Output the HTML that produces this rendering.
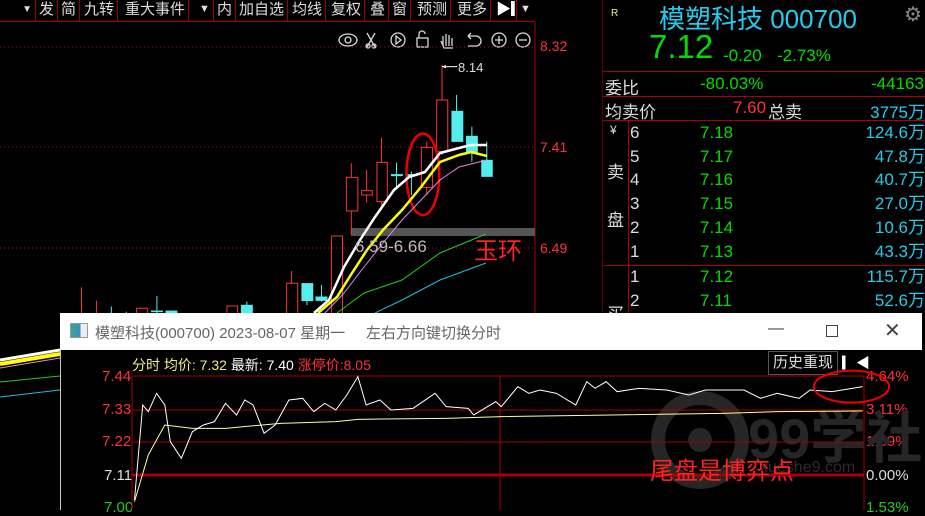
<!DOCTYPE html>
<html><head><meta charset="utf-8"><style>
*{margin:0;padding:0;box-sizing:border-box}
body{width:925px;height:510px;background:#000;overflow:hidden;position:relative;font-family:"Liberation Sans","Noto Sans CJK SC",sans-serif}
.a{position:absolute;white-space:nowrap}
.tb{position:absolute;top:0;height:21px;line-height:19px;font-size:15px;color:#ddd;border-right:1px solid #900;padding:0 3px}
.r{color:#ddd;font-size:17px}
.g{color:#00dd00}.c{color:#22ccee}
</style></head><body>
<!-- toolbar -->
<div class="a" style="left:0;top:21px;width:535px;height:1px;background:#a00"></div>
<div class="tb" style="left:0;width:36px;text-align:right;font-size:10px">▼</div>
<div class="tb" style="left:36px">发</div>
<div class="tb" style="left:58px">简</div>
<div class="tb" style="left:81px">九转</div>
<div class="tb" style="left:122px">重大事件</div>
<div class="tb" style="left:196px;font-size:11px">▼</div>
<div class="tb" style="left:214px">内</div>
<div class="tb" style="left:236px">加自选</div>
<div class="tb" style="left:289px">均线</div>
<div class="tb" style="left:328px">复权</div>
<div class="tb" style="left:367px">叠</div>
<div class="tb" style="left:389px">窗</div>
<div class="tb" style="left:414px">预测</div>
<div class="tb" style="left:454px">更多</div>
<div class="tb" style="left:493px;width:24px;color:#fff">▶▎</div>
<div class="tb" style="left:517px;font-size:11px;border:none">▼</div>
<!-- main chart svg -->
<svg class="a" style="left:0;top:0" width="603" height="320">
<g stroke="#fff" stroke-width="1.3" fill="none" opacity=".85">
<ellipse cx="348" cy="40" rx="9" ry="6"/><circle cx="348" cy="40" r="3"/>
<path d="M367 33l8 14M375 33l-8 14"/><circle cx="368" cy="46" r="2"/><circle cx="374" cy="46" r="2"/>
<circle cx="398" cy="40" r="7"/><path d="M396 36v8l5-4z"/>
<rect x="417" y="38" width="11" height="9"/><path d="M419 38v-4a3 3 0 0 1 6 0"/>
<path d="M443 46v-10M446 46v-12M449 46v-11M452 46v-8M441 41l3 7h9"/>
<path d="M468 36h8a5 5 0 0 1 0 10h-8M468 36l3-3M468 36l3 3"/>
<circle cx="499" cy="40" r="7"/><path d="M495 40h8M499 36v8"/>
<circle cx="523" cy="40" r="7"/><path d="M519 40h8"/>
</g>
<line x1="535" y1="22" x2="535" y2="320" stroke="#a00"/>
<line x1="603" y1="0" x2="603" y2="320" stroke="#a00"/>
<g stroke="#c00" stroke-dasharray="1 3"><line x1="0" y1="47" x2="535" y2="47"/><line x1="0" y1="147" x2="535" y2="147"/><line x1="0" y1="248" x2="535" y2="248"/></g>
<rect x="351" y="228" width="184" height="8" fill="#555"/>
<g transform="scale(0.3827,0.3333)">
<g fill="none" stroke="#f33" stroke-width="1" vector-effect="non-scaling-stroke">
<path d="M1155 195v105M1155 455v10" vector-effect="non-scaling-stroke"/><rect x="1141" y="300" width="29" height="155" vector-effect="non-scaling-stroke"/>
<path d="M1115 425v17M1115 562v23" vector-effect="non-scaling-stroke"/><rect x="1101" y="442" width="29" height="120" vector-effect="non-scaling-stroke"/>
<path d="M997 413v74M997 605v25" vector-effect="non-scaling-stroke"/><rect x="985" y="487" width="27" height="118" vector-effect="non-scaling-stroke"/>
<path d="M958 510v62M958 585v23" vector-effect="non-scaling-stroke"/><rect x="945" y="572" width="28" height="13" vector-effect="non-scaling-stroke"/>
<path d="M918 490v42M918 633v72" vector-effect="non-scaling-stroke"/><rect x="905" y="532" width="30" height="101" vector-effect="non-scaling-stroke"/>
<rect x="866" y="708" width="29" height="240" vector-effect="non-scaling-stroke"/>
<path d="M762 813v37" vector-effect="non-scaling-stroke"/><rect x="749" y="850" width="29" height="100" vector-effect="non-scaling-stroke"/>
<rect x="593" y="918" width="28" height="30" vector-effect="non-scaling-stroke"/><rect x="357" y="925" width="28" height="25" vector-effect="non-scaling-stroke"/>
<path d="M213 862v90M252 902v50M566 940v10" vector-effect="non-scaling-stroke"/>
</g>
<g fill="#55eeee" stroke="#55eeee" vector-effect="non-scaling-stroke">
<path d="M1193 285v50M1233 380v105M1272 425v55M1036 488v72M1075 515v70M840 855v50M802 900v15M645 905v15M410 888v60M291 920v30M330 935v15" fill="none" vector-effect="non-scaling-stroke"/>
<rect x="1180" y="333" width="30" height="92"/><rect x="1218" y="408" width="30" height="52"/><rect x="1258" y="480" width="29" height="50"/>
<rect x="1022" y="523" width="30" height="5"/><rect x="1060" y="523" width="30" height="5"/>
<rect x="825" y="890" width="30" height="12"/><rect x="788" y="850" width="30" height="53"/>
<rect x="630" y="915" width="30" height="35"/><rect x="433" y="932" width="30" height="15"/><rect x="395" y="932" width="30" height="4"/>
</g>
<path d="M1155 200h40" stroke="#fff" fill="none" vector-effect="non-scaling-stroke"/><path d="M1155 200l10-5v10z" fill="#fff"/>
<ellipse cx="1105" cy="523" rx="43" ry="122" fill="none" stroke="#e00" stroke-width="2.5" vector-effect="non-scaling-stroke"/>
</g>
<text x="458" y="72" fill="#ddd" font-size="13" font-family="Liberation Sans">8.14</text>
<polyline points="314,313 329,300 344,267 360,240 375,217 394,190 409,177 425,172 440,153 459,148 471,145 487,145" fill="none" stroke="#fff" stroke-width="2.5"/>
<polyline points="318,313 337,297 352,273 367,250 383,230 402,210 421,187 440,162 459,155 471,152 487,156" fill="none" stroke="#ffff00" stroke-width="2.5"/>
<polyline points="325,313 344,293 364,267 383,243 402,220 421,200 440,180 459,167 487,160" fill="none" stroke="#e088e0" stroke-width="1"/>
<polyline points="337,313 364,293 402,280 440,253 486,234" fill="none" stroke="#22cc22" stroke-width="1"/>
<polyline points="375,313 402,300 440,280 486,263" fill="none" stroke="#22bbdd" stroke-width="1"/>
<g stroke="#f33" fill="none"><path d="M0 350h30M8 345v10M22 345v10"/><rect x="32" y="346" width="10" height="9"/></g>
<rect x="46" y="343" width="12" height="4" fill="#55eeee"/>
</svg>
<div class="a" style="left:540px;top:38px;color:#f33;font-size:14px">8.32</div>
<div class="a" style="left:540px;top:139px;color:#f33;font-size:14px">7.41</div>
<div class="a" style="left:540px;top:240px;color:#f33;font-size:14px">6.49</div>
<div class="a" style="left:355px;top:237px;color:#bbb;font-size:17px">6.59-6.66</div>
<div class="a" style="left:474px;top:231px;color:#f22;font-size:24px">玉环</div>
<!-- right panel -->
<div class="a" style="left:611px;top:8px;color:#ee8;font-size:10px">R</div>
<div class="a c" style="left:659px;top:-1px;font-size:26px">模塑科技 000700</div>
<div class="a" style="left:904px;top:2px;color:#888;font-size:20px">⚙</div>
<div class="a g" style="left:649px;top:28px;font-size:33px">7.12</div>
<div class="a g" style="left:723px;top:46px;font-size:17px">-0.20</div>
<div class="a g" style="left:777px;top:46px;font-size:17px">-2.73%</div>
<div class="a" style="left:603px;top:71px;width:322px;height:1px;background:#a00"></div>
<div class="a" style="left:603px;top:96px;width:322px;height:1px;background:#a00"></div>
<div class="a" style="left:603px;top:120px;width:322px;height:1px;background:#a00"></div>
<div class="a" style="left:603px;top:265px;width:322px;height:1px;background:#a00"></div>
<div class="a" style="left:628px;top:120px;width:1px;height:200px;background:#a00"></div>
<div class="a r" style="left:605px;top:74px">委比</div>
<div class="a g" style="left:700px;top:74px;font-size:17px">-80.03%</div>
<div class="a g" style="left:871px;top:74px;font-size:17px">-44163</div>
<div class="a r" style="left:605px;top:98px">均卖价</div>
<div class="a" style="left:733px;top:98px;color:#f33;font-size:17px">7.60</div>
<div class="a r" style="left:768px;top:98px">总卖</div>
<div class="a c" style="left:851px;top:98px;font-size:17px;width:74px;text-align:right">3775万</div>
<div class="a r" style="left:610px;top:123px;font-size:12px">¥</div>
<div class="a r" style="left:607px;top:158px">卖</div>
<div class="a r" style="left:607px;top:206px">盘</div>
<div class="a r" style="left:607px;top:300px">买</div>
<div class="a" style="left:630px;top:121px;width:295px;font-size:17px;line-height:23.7px">
<div style="display:flex"><span class="r" style="width:70px">6</span><span class="g" style="width:95px">7.18</span><span class="c" style="flex:1;text-align:right">124.6万</span></div>
<div style="display:flex"><span class="r" style="width:70px">5</span><span class="g" style="width:95px">7.17</span><span class="c" style="flex:1;text-align:right">47.8万</span></div>
<div style="display:flex"><span class="r" style="width:70px">4</span><span class="g" style="width:95px">7.16</span><span class="c" style="flex:1;text-align:right">40.7万</span></div>
<div style="display:flex"><span class="r" style="width:70px">3</span><span class="g" style="width:95px">7.15</span><span class="c" style="flex:1;text-align:right">27.0万</span></div>
<div style="display:flex"><span class="r" style="width:70px">2</span><span class="g" style="width:95px">7.14</span><span class="c" style="flex:1;text-align:right">10.6万</span></div>
<div style="display:flex"><span class="r" style="width:70px">1</span><span class="g" style="width:95px">7.13</span><span class="c" style="flex:1;text-align:right">43.3万</span></div>
<div style="display:flex;margin-top:2px"><span class="r" style="width:70px">1</span><span class="g" style="width:95px">7.12</span><span class="c" style="flex:1;text-align:right">115.7万</span></div>
<div style="display:flex"><span class="r" style="width:70px">2</span><span class="g" style="width:95px">7.11</span><span class="c" style="flex:1;text-align:right">52.6万</span></div>
</div>
<!-- left lower lines (outside popup) -->
<svg class="a" style="left:0;top:340px" width="60" height="70">
<path d="M0 20 L60 10" stroke="#fff" stroke-width="3"/>
<path d="M0 24 L60 14" stroke="#ffff00" stroke-width="4"/>
<path d="M0 28 L60 18" stroke="#e088e0"/>
<path d="M0 42 L60 36" stroke="#22cc22"/>
<path d="M0 57 L60 50" stroke="#22bbdd"/>
</svg>
<!-- popup -->
<div class="a" style="left:60px;top:313px;width:862px;height:197px;background:#000;border-left:1px solid #ccc"></div>
<div class="a" style="left:60px;top:313px;width:862px;height:37px;background:#fff"></div>
<div class="a" style="left:70px;top:323px;width:18px;height:15px;border:1px solid #999;background:linear-gradient(90deg,#3a8 0,#48c 60%,#eee 60%)"></div>
<div class="a" style="left:95px;top:322px;font-size:15px;color:#666">模塑科技(000700) 2023-08-07 星期一&nbsp;&nbsp;&nbsp;&nbsp;&nbsp;左右方向键切换分时</div>
<div class="a" style="left:768px;top:320px;font-size:16px;color:#444">—</div>
<div class="a" style="left:826px;top:325px;width:12px;height:12px;border:1px solid #444"></div>
<div class="a" style="left:884px;top:318px;font-size:20px;color:#444">✕</div>
<div class="a" style="left:132px;top:355px;font-size:14px;color:#ee8">分时 均价: 7.32 <span style="color:#fff">最新: 7.40</span> <span style="color:#f33">涨停价:8.05</span></div>
<div class="a" style="left:768px;top:351px;width:70px;height:24px;border:1px solid #555;color:#ddd;font-size:15px;line-height:22px;text-align:center">历史重现</div>
<div class="a" style="left:842px;top:353px;font-size:14px;color:#fff">▎◀</div>
<div class="a" style="left:102px;top:368px;color:#f33;font-size:15px">7.44</div>
<div class="a" style="left:102px;top:401px;color:#f33;font-size:15px">7.33</div>
<div class="a" style="left:102px;top:433px;color:#f33;font-size:15px">7.22</div>
<div class="a" style="left:104px;top:467px;color:#ddd;font-size:15px">7.11</div>
<div class="a" style="left:104px;top:499px;color:#2c2;font-size:15px">7.00</div>
<div class="a" style="left:866px;top:368px;color:#f33;font-size:15px">4.64%</div>
<div class="a" style="left:866px;top:401px;color:#f33;font-size:15px">3.11%</div>
<div class="a" style="left:866px;top:433px;color:#f33;font-size:15px">1.59%</div>
<div class="a" style="left:866px;top:467px;color:#ddd;font-size:15px">0.00%</div>
<div class="a" style="left:866px;top:499px;color:#2c2;font-size:15px">1.53%</div>
<svg class="a" style="left:0;top:0" width="925" height="510">
<circle cx="700" cy="440" r="42" fill="none" stroke="#262626" stroke-width="14"/>
<circle cx="700" cy="440" r="12" fill="#262626"/>
<text x="748" y="458" fill="#262626" font-size="56" font-weight="bold" font-family="Liberation Sans,Noto Sans CJK SC,sans-serif">99学社</text>
<text x="760" y="472" fill="#2c2c2c" font-size="16" font-family="Liberation Sans">xueshe9.com</text>
<g stroke="#a00"><line x1="132" y1="376" x2="864" y2="376"/><line x1="132" y1="410" x2="864" y2="410"/><line x1="132" y1="442" x2="864" y2="442"/><line x1="132" y1="475" x2="864" y2="475" stroke-width="3"/>
<line x1="132" y1="376" x2="132" y2="510"/><line x1="864" y1="376" x2="864" y2="510"/><line x1="500" y1="376" x2="500" y2="510"/></g>
<g transform="translate(60,315) scale(0.5516,0.3333)" fill="none">
<polyline vector-effect="non-scaling-stroke" stroke="#ffff99" points="135,560 160,420 190,330 240,340 300,340 400,325 500,320 540,313 700,310 800,305 1000,300 1200,295 1300,290 1455,288"/>
<polyline vector-effect="non-scaling-stroke" stroke="#fff" points="135,555 150,270 160,290 175,235 190,270 200,380 220,430 240,350 260,330 280,320 300,265 320,300 335,255 350,270 370,355 390,330 415,255 440,250 460,290 480,265 500,285 520,240 540,185 555,270 580,255 600,285 640,280 680,235 700,275 740,280 750,300 790,260 800,275 830,215 850,235 870,225 900,235 935,270 955,200 970,220 990,200 1010,230 1050,220 1100,225 1140,240 1170,225 1220,225 1240,225 1270,250 1300,235 1340,250 1360,225 1400,230 1455,215"/>
<ellipse cx="1435" cy="215" rx="68" ry="48" stroke="#e00" stroke-width="2" vector-effect="non-scaling-stroke"/>
</g>
<text x="650" y="479" fill="#f22" font-size="24" font-family="Noto Sans CJK SC,sans-serif">尾盘是博弈点</text>
</svg>
</body></html>
